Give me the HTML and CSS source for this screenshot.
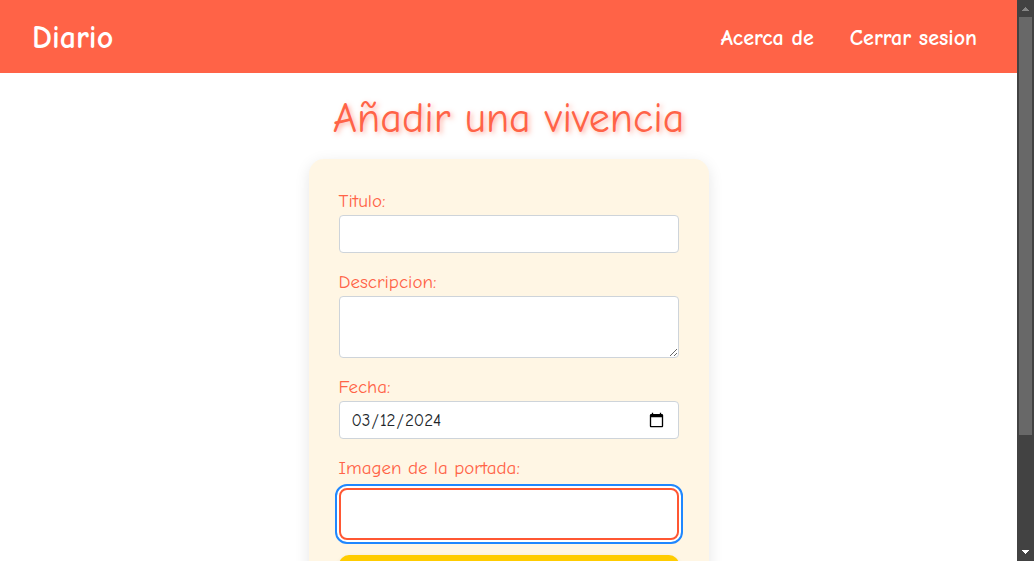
FILE: index.html
```html
<!DOCTYPE html>
<html lang="es">
<head>
<meta charset="utf-8">
<meta name="viewport" content="width=device-width, initial-scale=1">
<title>Diario</title>
<link rel="stylesheet" href="styles.css">
</head>
<body>
<div class="page">
  <header class="navbar">
    <a class="brand" href="#">Diario</a>
    <nav class="links">
      <a href="#">Acerca de</a>
      <a href="#">Cerrar sesion</a>
    </nav>
  </header>
  <main class="main">
    <h1 class="title">Añadir una vivencia</h1>
    <form class="card">
      <div class="field">
        <label for="titulo">Titulo:</label>
        <input class="control" id="titulo" type="text">
      </div>
      <div class="field">
        <label for="descripcion">Descripcion:</label>
        <textarea class="control control-area" id="descripcion"></textarea>
      </div>
      <div class="field">
        <label for="fecha">Fecha:</label>
        <input class="control" id="fecha" type="date" value="2024-03-12">
      </div>
      <div class="field">
        <label for="imagen">Imagen de la portada:</label>
        <input class="cover" id="imagen" type="text">
      </div>
      <button class="submit" type="submit" aria-label="Guardar"></button>
    </form>
  </main>
</div>
<div class="scrollbar" aria-hidden="true">
  <svg class="arrow arrow-up" viewBox="0 0 17 17"><path d="M5 11h7v-1h-1V9h-1V8H9V7H8v1H7v1H6v1H5z"/></svg>
  <div class="track"><div class="thumb"></div></div>
  <svg class="arrow" viewBox="0 0 17 17"><path d="M5 6h7v1h-1v1h-1v1H9v1H8V9H7V8H6V7H5z"/></svg>
</div>
</body>
</html>
```
FILE: styles.css
```css
* { box-sizing: border-box; }

body {
  margin: 0;
  height: 100vh;
  display: grid;
  grid-template-columns: minmax(0, 1fr) 17px;
  overflow: hidden;
  background: #fff;
  color: #212529;
  font-family: "Comic Sans MS", "Comic Neue", "Open Sans", sans-serif;
  font-size: 17px;
}

.page {
  min-height: 0;
  overflow: hidden;
}

.navbar {
  display: flex;
  align-items: center;
  justify-content: space-between;
  padding: 17px 40px 15px 32px;
  background: #ff6347;
  font-weight: 700;
}

.navbar a {
  color: #fff;
  text-decoration: none;
}

.brand {
  font-size: 32px;
  line-height: 41px;
}

.links {
  display: flex;
  gap: 36px;
  font-size: 22px;
  line-height: 26px;
}

.main {
  display: flex;
  flex-direction: column;
  align-items: center;
  padding: 16px;
}

.title {
  margin: 0 0 10px;
  color: #ff6347;
  font-size: 42px;
  font-weight: 400;
  line-height: 60px;
  text-shadow: 2px 2px 5px rgba(255, 99, 71, 0.5);
}

.card {
  width: 100%;
  max-width: 400px;
  padding: 28px 30px;
  border-radius: 15px;
  background: #fff6e4;
  box-shadow: 0 4px 15px rgba(0, 0, 0, 0.1);
}

.field {
  display: flex;
  flex-direction: column;
  margin-bottom: 15px;
}

.field label {
  color: #ff6347;
  font-size: 19px;
  line-height: 28px;
}

.control,
.cover {
  width: 100%;
  background: #fff;
  color: inherit;
  font: inherit;
}

.control {
  height: 38px;
  padding: 6px 11px;
  border: 1px solid #ced4da;
  border-radius: 4px;
}

.control-area {
  height: 62px;
  resize: vertical;
}

.cover {
  height: 52px;
  margin-top: 6px;
  padding: 10px;
  border: 2px solid #ff5733;
  border-radius: 8px;
  outline: 2px solid #1f87ff;
  outline-offset: 2px;
  box-shadow: 0 0 0 2px #fff;
}

.submit {
  width: 100%;
  height: 48px;
  border: 0;
  border-radius: 10px;
  background: #fc0;
  box-shadow: 0 2px 5px rgba(0, 0, 0, 0.1);
}

.scrollbar {
  display: flex;
  flex-direction: column;
  min-height: 0;
  background: #424242;
}

.arrow {
  width: 17px;
  height: 17px;
  flex: none;
  fill: #fff;
  shape-rendering: crispEdges;
}

.arrow-up { fill: #868686; }

.track {
  flex: 1;
  padding: 0 2px;
}

.thumb {
  height: 79.3%;
  background: #686868;
}
```
